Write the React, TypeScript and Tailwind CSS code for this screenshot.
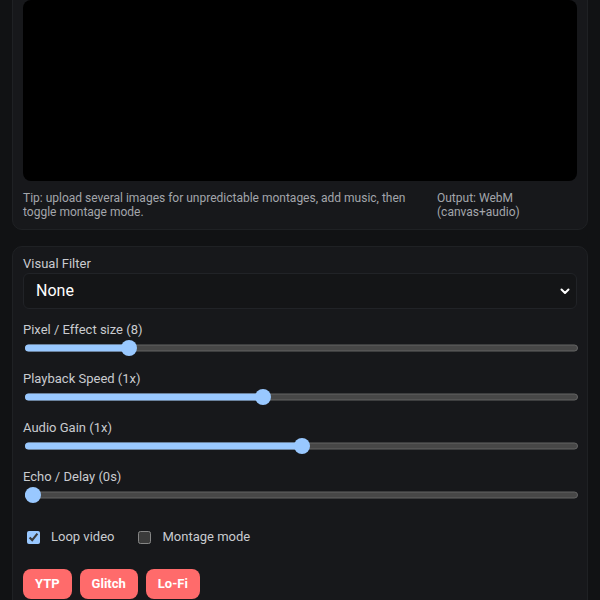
import React from "react";

function Slider({ label, min, max, value }: { label: string; min: number; max: number; value: number }) {
  const pct = (value - min) / (max - min);
  return (
    <div className="flex flex-col">
      <label className="text-[13px] leading-[16px] text-[#c9cbcf]">{label}</label>
      <div className="relative mt-[2px] ml-[2px] mr-[-1px] h-4">
        <div className="absolute inset-x-0 top-1/2 h-[7px] -translate-y-1/2 rounded-full border border-[#646464] bg-[#474747]" />
        <div
          className="absolute left-0 top-1/2 h-[7px] -translate-y-1/2 rounded-full bg-[#99c8ff]"
          style={{ width: `calc((100% - 16px) * ${pct} + 8px)` }}
        />
        <div
          className="absolute top-0 h-4 w-4 rounded-full bg-[#99c8ff]"
          style={{ left: `calc((100% - 16px) * ${pct})` }}
        />
      </div>
    </div>
  );
}

export default function App() {
  return (
    <div
      className="min-h-[600px] bg-[#111214] px-3 [color-scheme:dark]"
      style={{ fontFamily: "Roboto, 'Noto Sans', sans-serif" }}
    >
      <div className="flex flex-col gap-[16px] -mt-[11px]">
        <div className="rounded-[10px] border border-[#1f2124] bg-[#17181b] px-[10px] pt-[10px] pb-[10px]">
          <div className="h-[181px] w-full rounded-[8px] bg-black" />
          <div className="mt-[10px] flex gap-4 text-[12px] leading-[14px] text-[#a3a6ab]">
            <p className="flex-1">
              Tip: upload several images for unpredictable montages, add music, then toggle montage mode.
            </p>
            <p className="w-[140px]">Output: WebM (canvas+audio)</p>
          </div>
        </div>

        <div className="rounded-[10px] border border-[#1f2124] bg-[#17181b] px-[10px] pt-[9px] pb-4">
          <label className="block text-[13px] leading-[16px] text-[#c9cbcf]">Visual Filter</label>
          <div className="relative mt-[1px]">
            <select className="h-[36px] w-full appearance-none rounded-[6px] border border-[#212327] bg-[#141517] pl-3 text-[16px] text-white outline-none">
              <option>None</option>
            </select>
            <svg
              className="pointer-events-none absolute right-[6px] top-1/2 -translate-y-1/2"
              width="12"
              height="12"
              viewBox="0 0 12 12"
            >
              <path d="M2.5 4.5 L6 8 L9.5 4.5" fill="none" stroke="white" strokeWidth="2" strokeLinecap="round" strokeLinejoin="round" />
            </svg>
          </div>

          <div className="mt-[13px] flex flex-col gap-[15px]">
            <Slider label="Pixel / Effect size (8)" min={1} max={40} value={8} />
            <Slider label="Playback Speed (1x)" min={0.25} max={2} value={1} />
            <Slider label="Audio Gain (1x)" min={0} max={2} value={1} />
            <Slider label="Echo / Delay (0s)" min={0} max={1} value={0} />
          </div>

          <div className="mt-[26px] flex h-4 items-center text-[13px] text-[#c9cbcf]">
            <label className="flex items-center gap-[11px]">
              <input type="checkbox" defaultChecked className="ml-[4px] h-[13px] w-[13px] [color-scheme:dark]" />
              Loop video
            </label>
            <label className="ml-[24px] flex items-center gap-[11px]">
              <input type="checkbox" className="h-[13px] w-[13px] [color-scheme:dark]" />
              Montage mode
            </label>
          </div>

          <div className="mt-[24px] flex gap-[8px]">
            <button className="h-[30px] rounded-[8px] bg-[#ff6b6b] px-3 text-[13px] font-bold text-white">YTP</button>
            <button className="h-[30px] rounded-[8px] bg-[#ff6b6b] px-3 text-[13px] font-bold text-white">Glitch</button>
            <button className="h-[30px] rounded-[8px] bg-[#ff6b6b] px-3 text-[13px] font-bold text-white">Lo-Fi</button>
          </div>
        </div>
      </div>
    </div>
  );
}
